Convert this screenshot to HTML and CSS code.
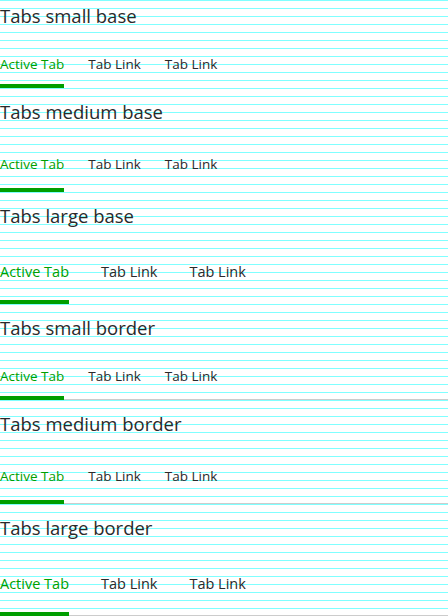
FILE: index.html
```html
<!DOCTYPE html>
<html lang="en">
<head>
<meta charset="utf-8">
<title>Tabs</title>
<link rel="stylesheet" href="styles.css">
</head>
<body>
  <section class="section">
    <h2 class="title">Tabs small base</h2>
    <nav class="tabs tabs-small">
      <a class="tab is-active">Active Tab</a>
      <a class="tab">Tab Link</a>
      <a class="tab">Tab Link</a>
    </nav>
  </section>
  <section class="section">
    <h2 class="title">Tabs medium base</h2>
    <nav class="tabs tabs-medium">
      <a class="tab is-active">Active Tab</a>
      <a class="tab">Tab Link</a>
      <a class="tab">Tab Link</a>
    </nav>
  </section>
  <section class="section">
    <h2 class="title">Tabs large base</h2>
    <nav class="tabs tabs-large">
      <a class="tab is-active">Active Tab</a>
      <a class="tab">Tab Link</a>
      <a class="tab">Tab Link</a>
    </nav>
  </section>
  <section class="section">
    <h2 class="title">Tabs small border</h2>
    <nav class="tabs tabs-small tabs-border">
      <a class="tab is-active">Active Tab</a>
      <a class="tab">Tab Link</a>
      <a class="tab">Tab Link</a>
    </nav>
  </section>
  <section class="section">
    <h2 class="title">Tabs medium border</h2>
    <nav class="tabs tabs-medium tabs-border">
      <a class="tab is-active">Active Tab</a>
      <a class="tab">Tab Link</a>
      <a class="tab">Tab Link</a>
    </nav>
  </section>
  <section class="section">
    <h2 class="title">Tabs large border</h2>
    <nav class="tabs tabs-large tabs-border">
      <a class="tab is-active">Active Tab</a>
      <a class="tab">Tab Link</a>
      <a class="tab">Tab Link</a>
    </nav>
  </section>
</body>
</html>
```

FILE: styles.css
```css
html {
  background-color: #ffffff;
  background-image: linear-gradient(to bottom, #80ffff 1px, transparent 1px);
  background-size: 100% 8px;
  min-height: 100%;
}

body {
  margin: 0;
  font-family: "Open Sans", "Noto Sans", sans-serif;
  color: #2a2a2a;
}

.section {
  margin-bottom: 8px;
}

.title {
  margin: 0;
  font-size: 18.5px;
  line-height: 32px;
  font-weight: 400;
  color: #2a2a2a;
}

.tabs {
  display: flex;
  gap: 24px;
}

.tab {
  display: block;
  font-size: 13.5px;
  font-weight: 400;
  line-height: 24px;
  color: #2a2a2a;
  border-bottom: 4px solid transparent;
  white-space: nowrap;
}

.tab.is-active {
  color: #00a000;
  border-bottom-color: #009e00;
}

.tabs-small .tab {
  padding: 20px 0 8px;
}

.tabs-medium .tab {
  padding: 24px 0 12px;
}

.tabs-large {
  gap: 32px;
}

.tabs-large .tab {
  font-size: 14.5px;
  padding: 28px 0 16px;
}

.tabs-border {
  border-bottom: 1px solid #cccccc;
}

.tabs-border .tab {
  margin-bottom: -1px;
}
```
